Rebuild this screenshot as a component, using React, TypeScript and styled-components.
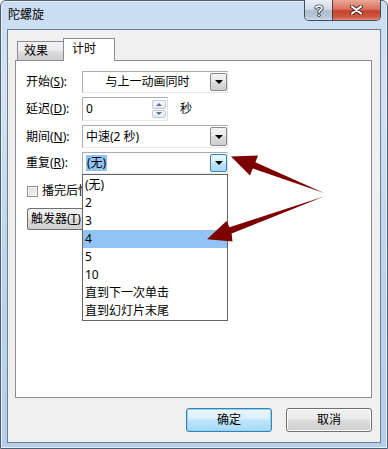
import styled, { createGlobalStyle } from "styled-components";

const GlobalStyle = createGlobalStyle`
  html, body {
    margin: 0;
    padding: 0;
  }
  body {
    width: 388px;
    height: 449px;
    overflow: hidden;
    background: #ffffff;
    font-family: "Noto Sans", "Noto Sans CJK SC", sans-serif;
    font-size: 12px;
    color: #000000;
  }
`;

const Window = styled.div`
  position: relative;
  box-sizing: border-box;
  width: 388px;
  height: 449px;
  border: 1px solid #4f5e70;
  border-radius: 6px 6px 0 0;
  background: linear-gradient(180deg, #c9dcf1 0%, #d3e3f4 20%, #bcd4ee 60%, #b5cfec 100%);
  box-shadow: inset 1px 1px 0 #e6f0fa, inset -1px -1px 0 #e6f0fa;
  display: flex;
  flex-direction: column;
  padding: 0 6px 5px 6px;
`;

const TitleBar = styled.div`
  height: 28px;
  display: flex;
  justify-content: space-between;
  align-items: flex-start;
`;

const Title = styled.div`
  margin: 6px 0 0 1px;
  line-height: 16px;
  font-size: 12px;
  color: #000;
`;

const CaptionGroup = styled.div`
  display: flex;
  height: 20px;
  margin-top: -1px;
  border: 1px solid #3f4c5c;
  border-top: none;
  border-radius: 0 0 5px 5px;
  overflow: hidden;
`;

const CaptionButton = styled.div<{ $close?: boolean }>`
  width: ${(p) => (p.$close ? "47px" : "27px")};
  display: flex;
  align-items: center;
  justify-content: center;
  border-left: ${(p) => (p.$close ? "1px solid #5a3a36" : "none")};
  background: ${(p) =>
    p.$close
      ? "linear-gradient(180deg, #e9a896 0%, #d9735f 45%, #c7412c 55%, #cf5a43 85%, #e48a72 100%)"
      : "linear-gradient(180deg, #e8eef5 0%, #d2dce7 45%, #aebdcd 55%, #b9c8d7 85%, #cfdbe7 100%)"};
`;

const Client = styled.div`
  flex: 1;
  display: flex;
  flex-direction: column;
  border: 1px solid #6f7d8e;
  background: #f0f0f0;
  padding: 8px 8px 10px 7px;
`;

const TabStrip = styled.div`
  display: flex;
  align-items: flex-end;
  height: 22px;
  padding-left: 2px;
`;

const Tab = styled.div<{ $active?: boolean }>`
  position: relative;
  z-index: ${(p) => (p.$active ? 2 : 1)};
  box-sizing: border-box;
  height: ${(p) => (p.$active ? "23px" : "19px")};
  margin-bottom: ${(p) => (p.$active ? "-1px" : "0")};
  margin-left: ${(p) => (p.$active ? "-1px" : "0")};
  width: ${(p) => (p.$active ? "52px" : "47px")};
  padding-left: ${(p) => (p.$active ? "8px" : "6px")};
  padding-top: ${(p) => (p.$active ? "2px" : "1px")};
  line-height: 16px;
  border: 1px solid #898c95;
  border-bottom: none;
  background: ${(p) =>
    p.$active ? "#ffffff" : "linear-gradient(180deg, #f3f3f3 0%, #ebebeb 50%, #dddddd 51%, #cfcfcf 100%)"};
`;

const Panel = styled.div`
  flex: 1;
  box-sizing: border-box;
  border: 1px solid #898c95;
  background: #ffffff;
  padding: 10px 10px 0 10px;
`;

const Form = styled.div`
  display: grid;
  grid-template-columns: 56px auto;
  row-gap: 4px;
  align-items: center;
`;

const Label = styled.div`
  line-height: 16px;
  white-space: nowrap;
`;

const ControlRow = styled.div`
  display: flex;
  align-items: center;
`;

const Combo = styled.div<{ $h: number; $center?: boolean }>`
  position: relative;
  box-sizing: border-box;
  width: 146px;
  height: ${(p) => p.$h}px;
  border: 1px solid #abadb3;
  border-right-color: #dbdfe6;
  border-bottom-color: #e3e9ef;
  background: #ffffff;
  display: flex;
  align-items: center;
  padding-left: 3px;
  padding-right: 18px;
  justify-content: ${(p) => (p.$center ? "center" : "flex-start")};
  line-height: 16px;
`;

const ComboValue = styled.span<{ $selected?: boolean }>`
  background: ${(p) => (p.$selected ? "#91c3f5" : "transparent")};
  padding: 0 ${(p) => (p.$selected ? "1px" : "0")};
  line-height: 16px;
`;

const DropButton = styled.div<{ $hot?: boolean }>`
  position: absolute;
  right: 0;
  top: 1px;
  bottom: 1px;
  width: 17px;
  box-sizing: border-box;
  border: 1px solid ${(p) => (p.$hot ? "#3c7fb1" : "#8a8a8a")};
  border-radius: 2px;
  background: ${(p) =>
    p.$hot
      ? "linear-gradient(180deg, #eaf6fd 0%, #d9f0fc 45%, #bee6fd 50%, #a7d9f5 100%)"
      : "linear-gradient(180deg, #f2f2f2 0%, #ebebeb 45%, #dddddd 50%, #cfcfcf 100%)"};
  display: flex;
  align-items: center;
  justify-content: center;

  &::after {
    content: "";
    width: 0;
    height: 0;
    border-left: 4px solid transparent;
    border-right: 4px solid transparent;
    border-top: 4px solid #000;
  }
`;

const SpinBox = styled.div`
  position: relative;
  box-sizing: border-box;
  width: 86px;
  height: 24px;
  border: 1px solid #abadb3;
  border-right-color: #dbdfe6;
  border-bottom-color: #e3e9ef;
  background: #fff;
  padding-left: 3px;
  display: flex;
  align-items: center;
  line-height: 16px;
`;

const SpinButtons = styled.div`
  position: absolute;
  right: 1px;
  top: 2px;
  bottom: 2px;
  width: 14px;
  display: flex;
  flex-direction: column;
  gap: 1px;
`;

const SpinButton = styled.div<{ $down?: boolean }>`
  flex: 1;
  box-sizing: border-box;
  border: 1px solid #c3c9d3;
  border-radius: 2px;
  background: linear-gradient(180deg, #f7f8fa 0%, #e6e9ee 100%);
  display: flex;
  align-items: center;
  justify-content: center;

  &::after {
    content: "";
    width: 0;
    height: 0;
    border-left: 3px solid transparent;
    border-right: 3px solid transparent;
    ${(p) => (p.$down ? "border-top: 3px solid #5d6f8c;" : "border-bottom: 3px solid #5d6f8c;")}
  }
`;

const Unit = styled.span`
  margin-left: 12px;
  line-height: 16px;
`;

const RepeatWrap = styled.div`
  position: relative;
`;

const DropList = styled.div`
  position: absolute;
  z-index: 5;
  left: 0;
  top: 100%;
  box-sizing: border-box;
  width: 146px;
  height: 147px;
  border: 1px solid #646464;
  background: #ffffff;
  padding-top: 1px;
`;

const ListItem = styled.div<{ $hi?: boolean }>`
  height: 18px;
  line-height: 18px;
  padding-left: 2px;
  background: ${(p) => (p.$hi ? "#91c3f5" : "transparent")};
  white-space: nowrap;
`;

const CheckRow = styled.div`
  display: flex;
  align-items: center;
  gap: 4px;
  width: 55px;
  overflow: hidden;
  margin: 9px 0 0 1px;
  line-height: 16px;
  white-space: nowrap;
`;

const CheckBox = styled.div`
  flex: none;
  box-sizing: border-box;
  width: 11px;
  height: 11px;
  border: 1px solid #8f8f8f;
  background: linear-gradient(135deg, #dcdcdc 0%, #f4f4f4 100%);
  box-shadow: inset 0 0 0 1px #f6f6f6;
`;

const CheckText = styled.span`
  overflow: hidden;
`;

const TriggerButton = styled.div`
  box-sizing: border-box;
  width: 56px;
  height: 22px;
  margin: 9px 0 0 1px;
  border: 1px solid #707070;
  border-right: none;
  border-radius: 3px 0 0 3px;
  background: linear-gradient(180deg, #f2f2f2 0%, #ebebeb 45%, #dddddd 50%, #cfcfcf 100%);
  padding-left: 3px;
  line-height: 20px;
  white-space: nowrap;
  overflow: hidden;
`;

const ButtonRow = styled.div`
  display: flex;
  justify-content: flex-end;
  gap: 14px;
  margin-top: 10px;
`;

const DialogButton = styled.div<{ $default?: boolean }>`
  box-sizing: border-box;
  width: 86px;
  height: 24px;
  border: 1px solid ${(p) => (p.$default ? "#3c7fb1" : "#707070")};
  border-radius: 3px;
  background: ${(p) =>
    p.$default
      ? "linear-gradient(180deg, #eaf6fd 0%, #d9f0fc 45%, #bee6fd 50%, #a7d9f5 100%)"
      : "linear-gradient(180deg, #f2f2f2 0%, #ebebeb 45%, #dddddd 50%, #cfcfcf 100%)"};
  box-shadow: ${(p) => (p.$default ? "inset 0 0 0 1px #8fd3f5" : "inset 0 0 0 1px #fbfbfb")};
  display: flex;
  align-items: center;
  justify-content: center;
  line-height: 16px;
`;

const Overlay = styled.svg`
  position: absolute;
  left: -1px;
  top: -1px;
  pointer-events: none;
  z-index: 10;
`;

const repeatOptions = ["(无)", "2", "3", "4", "5", "10", "直到下一次单击", "直到幻灯片末尾"];

function HelpGlyph() {
  return (
    <svg width="10" height="13" viewBox="0 0 10 13">
      <path
        d="M2 4 C2 1.5 8 1.5 8 4 C8 6 5 6 5 8.2"
        fill="none"
        stroke="#3b4654"
        strokeWidth="3.4"
        strokeLinecap="round"
      />
      <path
        d="M2 4 C2 1.5 8 1.5 8 4 C8 6 5 6 5 8.2"
        fill="none"
        stroke="#ffffff"
        strokeWidth="1.6"
        strokeLinecap="round"
      />
      <circle cx="5" cy="11.2" r="1.7" fill="#3b4654" />
      <circle cx="5" cy="11.2" r="0.9" fill="#ffffff" />
    </svg>
  );
}

function CloseGlyph() {
  return (
    <svg width="13" height="10" viewBox="0 0 13 10">
      <path d="M2 1.5 L11 8.5 M11 1.5 L2 8.5" stroke="#4a2a26" strokeWidth="4" strokeLinecap="round" />
      <path d="M2 1.5 L11 8.5 M11 1.5 L2 8.5" stroke="#ffffff" strokeWidth="2.2" strokeLinecap="round" />
    </svg>
  );
}

function App() {
  return (
    <>
      <GlobalStyle />
      <Window>
        <TitleBar>
          <Title>陀螺旋</Title>
          <CaptionGroup>
            <CaptionButton>
              <HelpGlyph />
            </CaptionButton>
            <CaptionButton $close>
              <CloseGlyph />
            </CaptionButton>
          </CaptionGroup>
        </TitleBar>

        <Client>
          <TabStrip>
            <Tab>效果</Tab>
            <Tab $active>计时</Tab>
          </TabStrip>

          <Panel>
            <Form>
              <Label>
                开始(<u>S</u>):
              </Label>
              <Combo $h={22} $center>
                <ComboValue>与上一动画同时</ComboValue>
                <DropButton />
              </Combo>

              <Label>
                延迟(<u>D</u>):
              </Label>
              <ControlRow>
                <SpinBox>
                  0
                  <SpinButtons>
                    <SpinButton />
                    <SpinButton $down />
                  </SpinButtons>
                </SpinBox>
                <Unit>秒</Unit>
              </ControlRow>

              <Label>
                期间(<u>N</u>):
              </Label>
              <Combo $h={23}>
                <ComboValue>中速(2 秒)</ComboValue>
                <DropButton />
              </Combo>

              <Label>
                重复(<u>R</u>):
              </Label>
              <RepeatWrap>
                <Combo $h={22}>
                  <ComboValue $selected>(无)</ComboValue>
                  <DropButton $hot />
                </Combo>
                <DropList>
                  {repeatOptions.map((opt) => (
                    <ListItem key={opt} $hi={opt === "4"}>
                      {opt}
                    </ListItem>
                  ))}
                </DropList>
              </RepeatWrap>
            </Form>

            <CheckRow>
              <CheckBox />
              <CheckText>播完后快退</CheckText>
            </CheckRow>
            <TriggerButton>
              触发器(<u>T</u>)
            </TriggerButton>
          </Panel>

          <ButtonRow>
            <DialogButton $default>确定</DialogButton>
            <DialogButton>取消</DialogButton>
          </ButtonRow>
        </Client>

        <Overlay width="388" height="449" viewBox="0 0 388 449">
          <polygon
            points="231,156.5 258,155.5 255.4,162.2 324,193 252.8,168.4 250,175.5"
            fill="#7c0000"
          />
          <polygon
            points="207,239.3 226.5,221 229.5,227.3 324,196.5 231.6,233.6 232.5,241.5"
            fill="#7c0000"
          />
        </Overlay>
      </Window>
    </>
  );
}

export default App;
